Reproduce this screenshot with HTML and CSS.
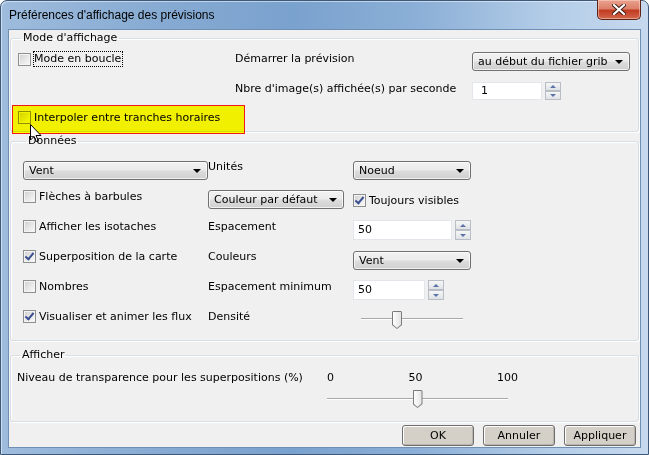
FILE: index.html
```html
<!DOCTYPE html>
<html>
<head>
    <title>Préférences d'affichage des prévisions</title>
    <link rel="stylesheet" href="styles.css">
</head>
<body>
<div class="window">
    <div class="titlebar">
        <span class="title">Préférences d'affichage des prévisions</span>
        <div class="close">
            <svg width="14" height="11" viewBox="0 0 14 11">
                <path d="M2 1 L12 10 M12 1 L2 10" stroke="#3b1a12" stroke-width="4" stroke-linecap="square"/>
                <path d="M2 1 L12 10 M12 1 L2 10" stroke="#fff" stroke-width="2.2" stroke-linecap="square"/>
            </svg>
        </div>
    </div>

    <div class="client">
        <fieldset class="group group-mode">
            <legend>Mode d'affichage</legend>
            <div class="mode-grid">
                <label class="check"><span class="box"></span><span class="focus">Mode en boucle</span></label>
                <span class="text">Démarrer la prévision</span>
                <div class="combo">au début du fichier grib<span class="arrow"></span></div>

                <span></span>
                <span class="text">Nbre d'image(s) affichée(s) par seconde</span>
                <div class="spin">
                    <div class="spin-field">1</div>
                    <div class="spin-btns"><span class="up"></span><span class="down"></span></div>
                </div>
            </div>
            <label class="check interp"><span class="box"></span>Interpoler entre tranches horaires</label>
            <!-- annotation drawn over the dialog -->
            <div class="highlight"></div>
            <svg class="cursor" width="12" height="19" viewBox="0 0 12 19">
                <path d="M0.5 0.5 V16 L4 12.5 L6.5 18 L8.5 17 L6 11.5 H11 Z" fill="#fff" stroke="#000" stroke-width="1"/>
            </svg>
        </fieldset>

        <fieldset class="group group-data">
            <legend>Données</legend>
            <div class="data-grid">
                <div class="combo">Vent<span class="arrow"></span></div>
                <span class="text">Unités</span>
                <div class="combo">Noeud<span class="arrow"></span></div>

                <label class="check"><span class="box"></span>Flèches à barbules</label>
                <div class="combo combo-low">Couleur par défaut<span class="arrow"></span></div>
                <label class="check check-low"><span class="box checked"></span>Toujours visibles</label>

                <label class="check"><span class="box"></span>Afficher les isotaches</label>
                <span class="text">Espacement</span>
                <div class="spin">
                    <div class="spin-field field-long">50</div>
                    <div class="spin-btns"><span class="up"></span><span class="down"></span></div>
                </div>

                <label class="check"><span class="box checked"></span>Superposition de la carte</label>
                <span class="text">Couleurs</span>
                <div class="combo">Vent<span class="arrow"></span></div>

                <label class="check"><span class="box"></span>Nombres</label>
                <span class="text">Espacement minimum</span>
                <div class="spin">
                    <div class="spin-field">50</div>
                    <div class="spin-btns"><span class="up"></span><span class="down"></span></div>
                </div>

                <label class="check"><span class="box checked"></span>Visualiser et animer les flux</label>
                <span class="text">Densité</span>
                <div class="slider slider-small">
                    <div class="track"></div>
                    <span class="thumb" style="left: 31px"></span>
                </div>
            </div>
        </fieldset>

        <fieldset class="group group-show">
            <legend>Afficher</legend>
            <div class="show-grid">
                <span class="text">Niveau de transparence pour les superpositions (%)</span>
                <div class="ticks"><span>0</span><span>50</span><span>100</span></div>
                <span></span>
                <div class="slider slider-wide">
                    <div class="track"></div>
                    <span class="thumb" style="left: 50%"></span>
                </div>
            </div>
        </fieldset>

        <div class="buttons">
            <button class="btn">OK</button>
            <button class="btn">Annuler</button>
            <button class="btn">Appliquer</button>
        </div>
    </div>
</div>
</body>
</html>
```

FILE: styles.css
```css
body {
    margin: 0;
    font-family: "DejaVu Sans", Verdana, sans-serif;
    font-size: 11px;
    color: #000;
}
.window {
    width: 649px;
    height: 455px;
    box-sizing: border-box;
    border: 1px solid #3d5878;
    border-radius: 7px 7px 0 0;
    padding: 0 7px 6px 7px;
    display: flex;
    flex-direction: column;
    background: linear-gradient(to right, #9ebcdd 0%, #86aad2 25%, #7aa2ce 45%, #8cb0d7 65%, #b4cde8 85%, #c6d9ee 100%);
    box-shadow: inset 1px 1px rgba(255, 255, 255, 0.5);
}
.titlebar {
    flex: none;
    height: 28px;
    display: flex;
    justify-content: space-between;
    align-items: flex-start;
}
.title {
    font-family: "Liberation Sans", Arial, sans-serif;
    font-size: 12px;
    line-height: 16px;
    margin: 6px 0 0 1px;
    color: #000;
}
.close {
    width: 44px;
    height: 20px;
    box-sizing: border-box;
    margin-top: -1px;
    border: 1px solid #5b2419;
    border-top: none;
    border-radius: 0 0 5px 5px;
    background: linear-gradient(#eaa28f 0%, #dc8069 45%, #c23c22 55%, #d2674b 100%);
    box-shadow: inset 0 0 0 1px rgba(255, 220, 210, 0.5);
    display: flex;
    align-items: center;
    justify-content: center;
}
.client {
    flex: 1;
    min-height: 0;
    overflow: hidden;
    border: 1px solid #6f8fb3;
    background: #f0f0f0;
    padding: 0 1px;
    display: flex;
    flex-direction: column;
}
.group {
    flex: none;
    position: relative;
    margin: 1px 0 0 0;
    min-width: 0;
    border: 1px solid #d5dfe5;
    border-radius: 3px;
    box-shadow: inset 1px 1px #fff, 1px 1px #fff;
}
.group legend {
    padding: 0 2px;
    margin-left: 3px;
    line-height: 14px;
}
.text {
    line-height: 13px;
}

/* Mode d'affichage */
.group-mode {
    padding: 7px 7px 7px 7px;
}
.mode-grid {
    display: grid;
    grid-template-columns: 217px 237px 158px;
    grid-template-rows: 19px 18px;
    row-gap: 11px;
    align-items: start;
}
.interp {
    margin-top: 11px;
    height: 13px;
}
.highlight {
    position: absolute;
    left: 1px;
    top: 60px;
    width: 231px;
    height: 27px;
    border: 1px solid #ff1a1a;
    background: #ffff00;
    mix-blend-mode: multiply;
}
.cursor {
    position: absolute;
    left: 19px;
    top: 79px;
}

/* Données */
.group-data {
    margin-top: 2px;
    padding: 12px 7px 0 12px;
}
.data-grid {
    display: grid;
    grid-template-columns: 185px 145px 118px;
    grid-auto-rows: 30px;
    align-items: start;
}
.data-grid .combo {
    margin-top: 1px;
}
.data-grid .combo-low {
    margin-top: 0;
    width: 136px;
}
.check-low {
    margin-top: 4px;
}

/* Afficher */
.group-show {
    margin-top: 7px;
    padding: 9px 7px 12px 6px;
}
.show-grid {
    display: grid;
    grid-template-columns: 310px 191px;
    row-gap: 6px;
}
.ticks {
    display: flex;
    justify-content: space-between;
    line-height: 13px;
}

/* checkboxes */
.check {
    display: flex;
    align-items: center;
    gap: 3px;
    line-height: 13px;
}
.box {
    width: 13px;
    height: 13px;
    box-sizing: border-box;
    flex: none;
    border: 1px solid #8e8f8f;
    background: linear-gradient(135deg, #cfcfcf 0%, #e6e6e6 50%, #fbfbfb 100%);
    box-shadow: inset 0 0 0 1px #f4f4f4;
    position: relative;
}
.box.checked::after {
    content: "";
    position: absolute;
    left: 3px;
    top: 0px;
    width: 3px;
    height: 7px;
    border: solid #3a4f8f;
    border-width: 0 2px 2px 0;
    transform: rotate(40deg);
}
.focus {
    outline: 1px dotted #000;
    outline-offset: 0;
    padding: 0 1px 1px 0;
}

/* combo boxes */
.combo {
    height: 19px;
    box-sizing: border-box;
    border: 1px solid #707070;
    border-radius: 3px;
    padding: 0 6px 0 5px;
    display: flex;
    align-items: center;
    justify-content: space-between;
    background: linear-gradient(#f2f2f2 0%, #ebebeb 48%, #dddddd 52%, #cfcfcf 100%);
    box-shadow: inset 0 0 0 1px rgba(255, 255, 255, 0.7);
}
.arrow {
    width: 0;
    height: 0;
    border-top: 4px solid #000;
    border-left: 4px solid transparent;
    border-right: 4px solid transparent;
}

/* spin boxes */
.spin {
    display: flex;
    gap: 3px;
}
.spin-field {
    width: 70px;
    height: 18px;
    box-sizing: border-box;
    background: #fff;
    border: 1px solid #e3e6ea;
    padding-left: 8px;
    line-height: 16px;
}
.data-grid .spin-field {
    width: 72px;
    height: 20px;
    line-height: 18px;
    padding-left: 4px;
}
.data-grid .field-long {
    width: 100px;
}
.spin-btns {
    width: 16px;
    display: flex;
    flex-direction: column;
    gap: 0;
}
.spin-btns span {
    flex: 1;
    box-sizing: border-box;
    border: 1px solid #b8bdc6;
    background: linear-gradient(#f6f6f6, #dfe2e6);
    display: flex;
    align-items: center;
    justify-content: center;
}
.spin-btns .up::after {
    content: "";
    border-bottom: 3px solid #5c73a8;
    border-left: 3px solid transparent;
    border-right: 3px solid transparent;
}
.spin-btns .down::after {
    content: "";
    border-top: 3px solid #5c73a8;
    border-left: 3px solid transparent;
    border-right: 3px solid transparent;
}

/* sliders */
.slider {
    position: relative;
    height: 19px;
}
.slider-small {
    width: 102px;
    margin: 1px 0 0 8px;
}
.slider-wide {
    width: 181px;
}
.track {
    position: absolute;
    left: 0;
    right: 0;
    top: 7px;
    height: 1px;
    background: #a8a8a8;
    border-bottom: 1px solid #fff;
}
.slider-wide .track {
    top: 8px;
}
.thumb {
    position: absolute;
    top: 0;
    width: 10px;
    height: 18px;
}
.slider-wide .thumb {
    margin-left: -5px;
}
.thumb::before {
    content: "";
    position: absolute;
    inset: 0;
    background: #7b7b7b;
    clip-path: polygon(1px 0, 9px 0, 10px 1px, 10px 14px, 5px 18px, 0 14px, 0 1px);
}
.thumb::after {
    content: "";
    position: absolute;
    inset: 1px;
    background: linear-gradient(to right, #fdfdfd, #e4e4e4);
    clip-path: polygon(0 0, 8px 0, 8px 12.5px, 4px 16px, 0 12.5px);
}

/* dialog buttons */
.buttons {
    flex: none;
    display: flex;
    justify-content: flex-end;
    gap: 9px;
    padding: 3px 3px 0 0;
}
.btn {
    width: 72px;
    height: 21px;
    box-sizing: border-box;
    border: 1px solid #6e6e6e;
    border-radius: 3px;
    background: #d4d0c8;
    box-shadow: inset 1px 1px #fff, inset -1px -1px #b9b5ae;
    font-family: "DejaVu Sans", Verdana, sans-serif;
    font-size: 11px;
    color: #000;
    padding: 0;
}
```
